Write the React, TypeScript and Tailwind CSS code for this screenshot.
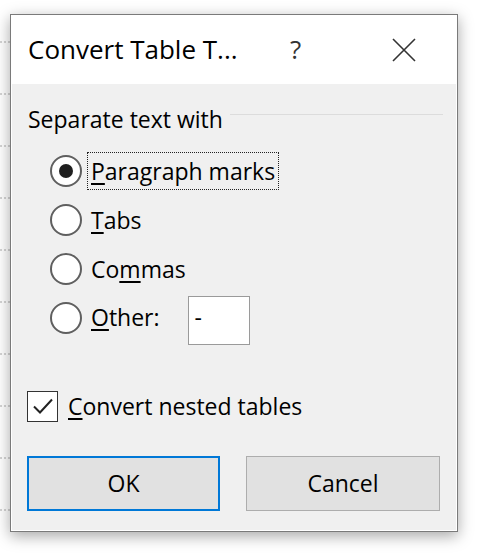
import type { ReactNode } from "react";

const FONT = { fontFamily: '"Open Sans", "Noto Sans", sans-serif' };

function Radio({ checked = false }: { checked?: boolean }) {
  return (
    <span className="w-[32px] h-[32px] shrink-0 rounded-full border-2 border-[#5f5f5f] bg-white flex items-center justify-center">
      {checked && <span className="w-[14px] h-[14px] rounded-full bg-[#1f1f1f]" />}
    </span>
  );
}

function Option({
  checked,
  focused,
  children,
}: {
  checked?: boolean;
  focused?: boolean;
  children: ReactNode;
}) {
  return (
    <div className="h-[49px] flex items-center">
      <Radio checked={checked} />
      <span
        className={`ml-[5px] px-[3px] leading-[36px] border border-dotted ${
          focused ? "border-[#222]" : "border-transparent"
        }`}
      >
        {children}
      </span>
    </div>
  );
}

export default function App() {
  return (
    <div className="w-[479px] h-[556px] bg-white flex overflow-hidden text-black" style={FONT}>
      {/* dotted rule marks of the page behind the dialog */}
      <div className="w-[10px] shrink-0 flex flex-col pt-[41px] gap-[50px]">
        {Array.from({ length: 10 }).map((_, i) => (
          <div key={i} className="h-[1.5px] border-t-2 border-dotted border-[#d4d4d4]" />
        ))}
      </div>

      <div className="mt-[14px] w-[448px] h-[518px] border border-[#7a7a7a] bg-white flex flex-col shadow-[0_4px_14px_rgba(0,0,0,0.35)]">
        {/* title bar */}
        <div className="h-[69px] shrink-0 flex items-center pl-[17px] text-[26px]">
          <span className="w-[262px]">Convert Table T...</span>
          <span className="text-[#333]">?</span>
          <svg className="ml-[91px]" width="24" height="24" viewBox="0 0 24 24">
            <path d="M1 1 L23 23 M23 1 L1 23" stroke="#333" strokeWidth="1.6" fill="none" />
          </svg>
        </div>

        {/* body */}
        <div className="flex-1 mx-[1px] mb-[1px] bg-[#f0f0f0] flex flex-col text-[23px]">
          <div className="mt-[17px] h-[36px] flex items-center pl-[16px] pr-[13px]">
            <span>Separate text with</span>
            <div className="flex-1 ml-[7px] mt-[-10px] h-[1px] bg-[#dcdcdc]" />
          </div>

          <div className="mt-[9px] pl-[38px] flex flex-col">
            <Option checked focused>
              <u className="underline-offset-[3px]">P</u>aragraph marks
            </Option>
            <Option>
              <u className="underline-offset-[3px]">T</u>abs
            </Option>
            <Option>
              Co<u className="underline-offset-[3px]">m</u>mas
            </Option>
            <div className="h-[49px] flex items-center">
              <Radio />
              <span className="ml-[5px] px-[3px] border border-transparent">
                <u className="underline-offset-[3px]">O</u>ther:
              </span>
              <div className="ml-[24px] mt-[6px] w-[62px] h-[49px] bg-white border border-[#9a9a9a] pl-[6px] leading-[40px]">
                -
              </div>
            </div>
          </div>

          <div className="mt-[48px] pl-[15px] h-[32px] flex items-center">
            <span className="w-[31px] h-[31px] border border-[#333] bg-white flex items-center justify-center">
              <svg width="22" height="22" viewBox="0 0 22 22">
                <path d="M2 11.5 L8 17.5 L20 4.5" stroke="#222" strokeWidth="2" fill="none" />
              </svg>
            </span>
            <span className="ml-[10px]">
              <u className="underline-offset-[3px]">C</u>onvert nested tables
            </span>
          </div>

          <div className="mt-[34px] pl-[15px] flex gap-[26px]">
            <button className="w-[193px] h-[55px] bg-[#e1e1e1] border-2 border-[#0078d7] text-[23px]">
              OK
            </button>
            <button className="w-[194px] h-[55px] bg-[#e1e1e1] border border-[#adadad] text-[23px]">
              Cancel
            </button>
          </div>
        </div>
      </div>
    </div>
  );
}
